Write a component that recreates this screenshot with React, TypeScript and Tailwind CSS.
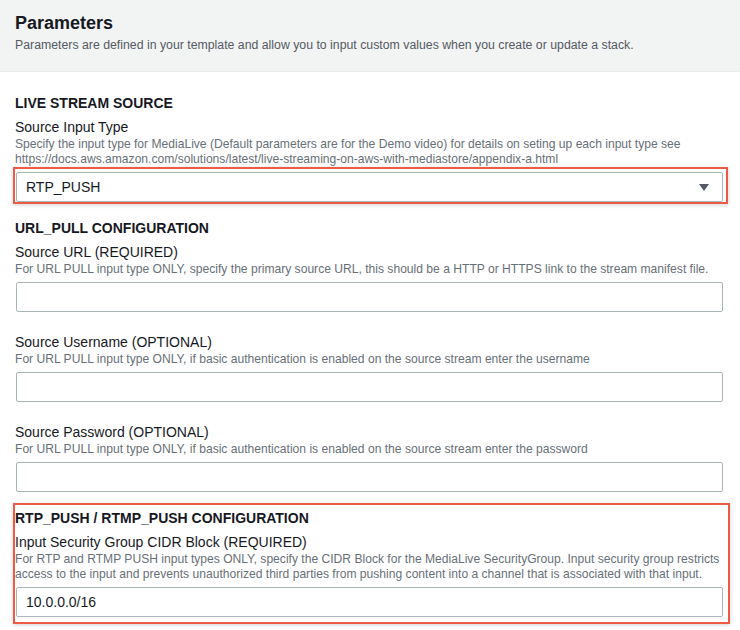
type FieldProps = {
  label: string;
  desc: React.ReactNode;
  value?: string;
  first?: boolean;
};

function Field({ label, desc, value = '', first = false }: FieldProps) {
  return (
    <div className={first ? 'mt-[4px]' : 'mt-[20px]'}>
      <div className="text-[14px] leading-[20px] text-[#16191f]">{label}</div>
      <div className="text-[12.1px] leading-[15px] text-[#687078]">{desc}</div>
      <div className="mt-[5px] ml-px h-[30px] border border-[#aab7b8] rounded-[2px] bg-white pl-[9px] flex items-center text-[14px] text-[#16191f]">
        {value}
      </div>
    </div>
  );
}

function SectionTitle({ children }: { children: React.ReactNode }) {
  return <h3 className="text-[14px] leading-[20px] font-bold text-[#16191f]">{children}</h3>;
}

export default function App() {
  return (
    <div className="w-[740px] h-[630px] bg-white font-['Liberation_Sans',Arial,sans-serif] overflow-hidden">
      {/* Header */}
      <div className="bg-[#f2f3f3] border-b border-[#eaeded] pl-[15px] pr-[15px] pt-[12px] pb-[18px]">
        <h2 className="text-[18px] leading-[22px] font-bold text-[#16191f]">Parameters</h2>
        <p className="mt-[3px] text-[12.3px] leading-[16px] text-[#545b64]">
          Parameters are defined in your template and allow you to input custom values when you create or update a stack.
        </p>
      </div>

      <div className="pl-[15px] pr-[17px] pt-[21px]">
        {/* Live stream source */}
        <SectionTitle>LIVE STREAM SOURCE</SectionTitle>
        <div className="mt-[4px] text-[14px] leading-[20px] text-[#16191f]">Source Input Type</div>
        <div className="text-[12.1px] leading-[15px] text-[#687078]">
          Specify the input type for MediaLive (Default parameters are for the Demo video) for details on seting up each input type see
          <br />
          https://docs.aws.amazon.com/solutions/latest/live-streaming-on-aws-with-mediastore/appendix-a.html
        </div>
        <div className="-ml-[2px] -mr-[5px] border-2 border-[#ee5a46] pl-px pr-[3px] pt-[3px] shadow-[0_1px_4px_rgba(0,0,0,0.18)]">
          <div className="h-[30px] border border-[#aab7b8] rounded-[2px] bg-white pl-[9px] pr-[13px] flex items-center justify-between text-[14px] text-[#16191f]">
            <span>RTP_PUSH</span>
            <svg width="10" height="7" viewBox="0 0 10 7">
              <path d="M0 0H10L5 7Z" fill="#545b64" />
            </svg>
          </div>
        </div>

        {/* URL pull */}
        <div className="mt-[14px]">
          <SectionTitle>URL_PULL CONFIGURATION</SectionTitle>
          <Field
            first
            label="Source URL (REQUIRED)"
            desc="For URL PULL input type ONLY, specify the primary source URL, this should be a HTTP or HTTPS link to the stream manifest file."
          />
          <Field
            label="Source Username (OPTIONAL)"
            desc="For URL PULL input type ONLY, if basic authentication is enabled on the source stream enter the username"
          />
          <Field
            label="Source Password (OPTIONAL)"
            desc="For URL PULL input type ONLY, if basic authentication is enabled on the source stream enter the password"
          />
        </div>

        {/* RTP / RTMP push */}
        <div className="mt-[11px] -ml-[2px] -mr-[7px] border-2 border-[#ee5a46] pr-[5px] pt-[3px] pb-[5px] shadow-[0_1px_4px_rgba(0,0,0,0.18)]">
          <SectionTitle>RTP_PUSH / RTMP_PUSH CONFIGURATION</SectionTitle>
          <Field
            first
            label="Input Security Group CIDR Block (REQUIRED)"
            desc={
              <>
                For RTP and RTMP PUSH input types ONLY, specify the CIDR Block for the MediaLive SecurityGroup. Input security group restricts
                <br />
                access to the input and prevents unauthorized third parties from pushing content into a channel that is associated with that input.
              </>
            }
            value="10.0.0.0/16"
          />
        </div>
      </div>
    </div>
  );
}
